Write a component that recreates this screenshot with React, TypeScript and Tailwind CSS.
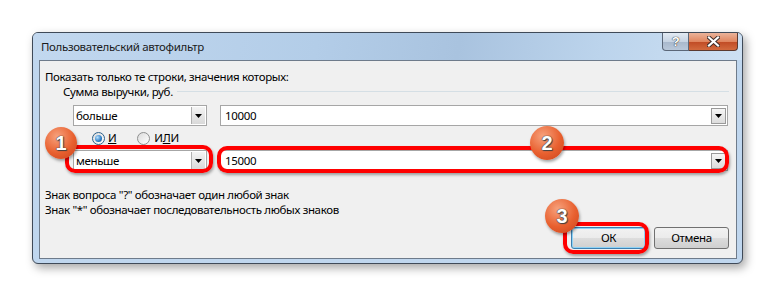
import React from 'react'

function Arrow() {
  return (
    <svg width="7" height="4" viewBox="0 0 7 4">
      <path d="M0 0h7L3.5 4z" fill="#000" />
    </svg>
  )
}

function Combo({ text }: { text: string }) {
  return (
    <div className="flex h-[21px] w-[134px] items-center border border-[#a6a6a6] bg-white">
      <span className="flex-1 pl-[2px] leading-none">{text}</span>
      <div className="mr-[1px] flex h-[17px] w-[14px] items-center justify-center border-l border-[#b0b0b0] bg-gradient-to-b from-[#f4f4f4] to-[#d9d9d9]">
        <Arrow />
      </div>
    </div>
  )
}

function ValueBox({ text }: { text: string }) {
  return (
    <div className="flex h-[21px] w-[508px] items-center border border-[#a6a6a6] bg-white">
      <span className="flex-1 pl-[4px] leading-none">{text}</span>
      <div className="mr-[1px] flex h-[16px] w-[15px] items-center justify-center border border-[#9a9a9a] bg-gradient-to-b from-[#f6f6f6] to-[#dcdcdc]">
        <Arrow />
      </div>
    </div>
  )
}

function Radio({ checked }: { checked?: boolean }) {
  return (
    <span className={`flex h-[13px] w-[13px] items-center justify-center rounded-full border ${checked ? 'border-[#2c628b]' : 'border-[#8e8f8f]'} bg-gradient-to-br from-[#dcdcdc] to-[#ffffff]`}>
      {checked && (
        <span className="h-[7px] w-[7px] rounded-full bg-[radial-gradient(circle_at_35%_35%,#b8e2ff,#2a7bc4_60%,#1b4f86)]" />
      )}
    </span>
  )
}

function Badge({ n, className }: { n: number; className: string }) {
  return (
    <div
      className={`absolute flex items-center justify-center rounded-full bg-[radial-gradient(circle_at_38%_30%,#f7a27d,#e8602f_55%,#c9431c)] shadow-[1px_2px_3px_rgba(0,0,0,0.35)] ${className}`}
    >
      <span className="font-['Liberation_Sans',sans-serif] text-[20px] font-bold leading-none text-white [text-shadow:0_0_1px_#333,0_0_1px_#333,1px_1px_1px_#444]">
        {n}
      </span>
    </div>
  )
}

function Highlight({ className }: { className: string }) {
  return (
    <div className={`pointer-events-none absolute rounded-[10px] border-[4px] border-[#ff0000] shadow-[1px_2px_3px_rgba(0,0,0,0.35)] ${className}`} />
  )
}

function WinButton({ label, primary }: { label: string; primary?: boolean }) {
  return (
    <div
      className={`flex h-[22px] w-[75px] items-center justify-center rounded-[3px] border ${
        primary ? 'border-[#3c7fb1] shadow-[inset_0_0_0_1px_#8ed2f5]' : 'border-[#707070]'
      } bg-[linear-gradient(to_bottom,#f2f2f2_0%,#ebebeb_50%,#dddddd_51%,#cfcfcf_100%)]`}
    >
      {label}
    </div>
  )
}

export default function App() {
  return (
    <div className="relative h-[297px] w-[775px] overflow-hidden bg-white pl-[32px] pt-[32px] font-['Noto_Sans',sans-serif] text-[11.5px] tracking-[-0.35px] text-black">
      {/* окно диалога */}
      <div className="flex h-[232px] w-[711px] flex-col rounded-[6px] border border-[#3f4a58] bg-[#bfd6ee] shadow-[3px_4px_10px_rgba(0,0,0,0.35)]">
        <div className="flex h-[27px] items-start rounded-t-[5px] bg-[linear-gradient(100deg,#c2d8ef_0%,#b3cde8_40%,#a9c3df_60%,#bcd4ec_80%,#cde0f3_100%)]">
          <span className="self-center pl-[8px] text-[#1b1b1b]">Пользовательский автофильтр</span>
          <div className="ml-auto mr-[4px] flex h-[18px]">
            <div className="flex w-[27px] items-center justify-center rounded-bl-[4px] border border-t-0 border-[#5b6778] bg-[linear-gradient(to_bottom,#e2eaf3_0%,#c7d4e3_50%,#a8b8cc_51%,#b9c8da_100%)]">
              <span className="font-['Liberation_Sans',sans-serif] text-[13px] font-bold leading-none text-white [text-shadow:0_0_1px_#2a2a2a,0_0_1px_#2a2a2a]">?</span>
            </div>
            <div className="flex w-[49px] items-center justify-center rounded-br-[4px] border border-l-0 border-t-0 border-[#5b3a30] bg-[linear-gradient(to_bottom,#eab39a_0%,#e08660_50%,#c04a24_51%,#d26a3e_100%)]">
              <svg width="13" height="11" viewBox="0 0 13 11">
                <path d="M2 1.5l9 8M11 1.5l-9 8" stroke="#3b2b27" strokeWidth="4" strokeLinecap="square" />
                <path d="M2 1.5l9 8M11 1.5l-9 8" stroke="#fff" strokeWidth="2.2" strokeLinecap="square" />
              </svg>
            </div>
          </div>
        </div>

        <div className="mx-[6px] mr-[5px] flex h-[199px] flex-col border border-[#6e7b8b] bg-[#f0f0f0] pt-[8px]">
          <div className="h-[15px] pl-[5px] leading-[15px]">Показать только те строки, значения которых:</div>
          <div className="flex h-[15px] items-center pl-[23px] leading-[15px]">
            <span>Сумма выручки, руб.</span>
            <div className="ml-[4px] mr-[7px] h-px flex-1 bg-[#d5dfe5]" />
          </div>

          <div className="ml-[33px] mt-[6px] flex gap-[13px]">
            <Combo text="больше" />
            <ValueBox text="10000" />
          </div>

          <div className="ml-[52px] mt-[4px] flex h-[16px] items-center">
            <Radio checked />
            <span className="ml-[3px]">
              <u>И</u>
            </span>
            <span className="ml-[21px]">
              <Radio />
            </span>
            <span className="ml-[4px]">
              И<u>Л</u>И
            </span>
          </div>

          <div className="ml-[33px] mt-[4px] flex gap-[13px]">
            <Combo text="меньше" />
            <ValueBox text="15000" />
          </div>

          <div className="mt-[16px] h-[15px] pl-[5px] leading-[15px]">Знак вопроса "?" обозначает один любой знак</div>
          <div className="h-[15px] pl-[5px] leading-[15px]">Знак "*" обозначает последовательность любых знаков</div>

          <div className="mr-[7px] mt-[10px] flex justify-end gap-[8px]">
            <WinButton label="ОК" primary />
            <WinButton label="Отмена" />
          </div>
        </div>
      </div>

      {/* выделения и номера шагов */}
      <Highlight className="left-[65px] top-[145px] h-[28px] w-[148px]" />
      <Highlight className="left-[217px] top-[146px] h-[27px] w-[512px]" />
      <Highlight className="left-[563px] top-[222px] h-[32px] w-[86px]" />
      <Badge n={1} className="left-[45px] top-[127px] h-[32px] w-[32px]" />
      <Badge n={2} className="left-[530px] top-[126px] h-[34px] w-[34px]" />
      <Badge n={3} className="left-[545px] top-[199px] h-[34px] w-[34px]" />
    </div>
  )
}
